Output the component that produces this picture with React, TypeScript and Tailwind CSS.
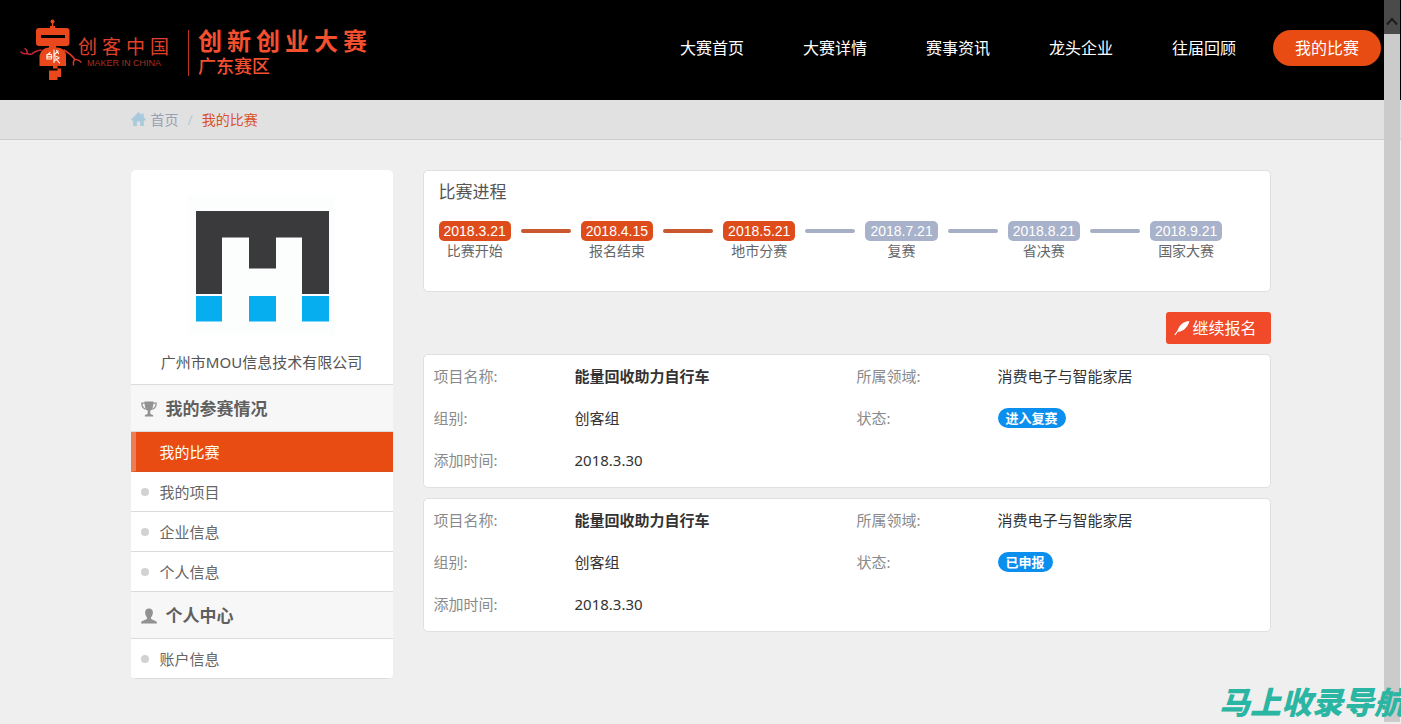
import React from "react";

const navItems = ["大赛首页", "大赛详情", "赛事资讯", "龙头企业", "往届回顾", "我的比赛"];

const menuSections = [
  {
    title: "我的参赛情况",
    icon: <TrophyIcon />,
    items: ["我的比赛", "我的项目", "企业信息", "个人信息"],
  },
  { title: "个人中心", icon: <PersonIcon />, items: ["账户信息"] },
];

const steps = [
  { date: "2018.3.21", label: "比赛开始", done: true },
  { date: "2018.4.15", label: "报名结束", done: true },
  { date: "2018.5.21", label: "地市分赛", done: true },
  { date: "2018.7.21", label: "复赛", done: false },
  { date: "2018.8.21", label: "省决赛", done: false },
  { date: "2018.9.21", label: "国家大赛", done: false },
];

const projects = [
  { name: "能量回收助力自行车", field: "消费电子与智能家居", group: "创客组", status: "进入复赛", added: "2018.3.30" },
  { name: "能量回收助力自行车", field: "消费电子与智能家居", group: "创客组", status: "已申报", added: "2018.3.30" },
];

function HomeIcon() {
  return (
    <svg viewBox="0 0 16 16" className="h-4 w-4 text-[#a9c9dc]" fill="currentColor" aria-hidden="true">
      <path d="M7.500 0 0 7.500l.9.900h1.300V14h3.600V9.500h3.400V14h3.600V8.400h1.300l.9-.900L12.700 5.200V1.500h-2v1.700z" />
    </svg>
  );
}

function TrophyIcon() {
  return (
    <svg viewBox="0 0 16 16" className="h-4 w-4" fill="none" aria-hidden="true">
      <path d="M4.500 2.200H.8c0 3.300 1.700 5.700 5 6.300M11.500 2.200h3.700c0 3.300-1.700 5.700-5 6.300" stroke="currentColor" strokeWidth="1.200" />
      <path d="M3.500.5h9c0 4.700-.9 8-3.200 9.200v2.500c0 1 2.300 1.300 2.900 2.200v1H3.800v-1c.6-.9 2.900-1.200 2.900-2.200V9.700C4.400 8.500 3.500 5.200 3.500.5z" fill="currentColor" />
    </svg>
  );
}

function PersonIcon() {
  return (
    <svg viewBox="0 0 16 16" className="h-4 w-4" fill="currentColor" aria-hidden="true">
      <path d="M8 .5c2.400 0 3.900 1.600 3.900 4 0 2.100-.9 3.900-1.900 4.900v1.300c.3.800 4.300 1.700 5.400 2.900.4.500.6 1.300.6 1.900H0c0-.6.2-1.400.6-1.900 1.100-1.200 5.100-2.100 5.400-2.900V9.400C5 8.400 4.100 6.600 4.100 4.500 4.100 2.100 5.600.5 8 .5z" />
    </svg>
  );
}

function FeatherIcon() {
  return (
    <svg viewBox="0 0 16 16" className="h-4 w-4" fill="currentColor" aria-hidden="true">
      <path d="M15.500 1.200C12 .8 8.300 2.700 6.200 5.500 4.800 7.300 4.200 9 3.500 10.500L.3 14.800l.9.400L4 11.700c2.800-.1 5.500-1.400 7.400-3.500 1.900-2 3.400-4.600 4.100-7z" />
    </svg>
  );
}

function Robot() {
  return (
    <svg viewBox="18 18 66 64" className="h-16 w-[66px] shrink-0" fill="none" aria-hidden="true">
      <g fill="#e8481c">
        <circle cx="52.500" cy="21.500" r="2" />
        <rect x="51.800" y="22" width="1.500" height="6" />
        <rect x="50" y="26" width="5" height="3" />
        <path fillRule="evenodd" d="M39 28h27.500a3 3 0 0 1 3 3v12a3 3 0 0 1-3 3H39a3 3 0 0 1-3-3V31a3 3 0 0 1 3-3zM41 35v3h24v-3z" />
        <rect x="49" y="46" width="7" height="3" />
        <path d="M39.500 66V55.500q2-7.500 9-8h9q7.500 1 8.500 7V66z" />
        <path d="M53 65h4.500v3.500H61V77h-3.500v3H49v-9.500h8.500v-2H53z" />
      </g>
      <g strokeWidth="1.500" strokeLinecap="round" strokeLinejoin="round">
        <path d="M41 50q-6 1-9 4-3 .5-5-.5-4 1-6-1.500M27 53.500q1-3-2-5" stroke="#c92335" />
        <path d="M64 50q7 4 11 9.500M81 62q-3-3-6-2.500-2 1-1.500 5.500" stroke="#d93627" />
      </g>
      <g stroke="#fff3e8" strokeWidth="1.200" strokeLinecap="round">
        <path d="M47 54.500h4.500v4.500H47zM46.500 56.800h5.500M50 52.500l-2 2M54 50v12.500M54 55l4-4M54 55.500l5 2M54 61l5-3M55.500 58l4 5M56.500 50.500l2 3" />
      </g>
    </svg>
  );
}

function SpacedText({ text, className }: { text: string; className: string }) {
  return (
    <span className={className}>
      {Array.from(text).map((ch, i) => (
        <span key={i}>{ch}</span>
      ))}
    </span>
  );
}

function Header() {
  return (
    <header className="flex min-h-[100px] flex-wrap items-center justify-between bg-black pr-5 pl-[18px]">
      <a href="#" className="flex items-center text-[#f4502f]">
        <Robot />
        <span className="-ml-1.5 flex flex-col pt-1">
          <SpacedText text="创客中国" className="flex gap-[5px] text-[19px] leading-[22px] text-[#e0402a]" />
          <span className="pl-[9px] font-['Liberation_Sans',sans-serif] text-[9px] leading-[10px] whitespace-nowrap text-[#a8301f]">
            MAKER IN CHINA
          </span>
        </span>
        <span className="mt-1.5 ml-[19px] h-[46px] w-px bg-[#c23422]" />
        <span className="ml-[9px] flex flex-col pt-1.5">
          <SpacedText text="创新创业大赛" className="flex gap-[5px] text-[24px] leading-[26px] font-bold" />
          <span className="text-[18px] leading-[24px] font-medium">广东赛区</span>
        </span>
      </a>
      <nav className="flex gap-[15px] pb-1 text-[16px] leading-9 text-white">
        {navItems.map((item) => (
          <a
            key={item}
            href="#"
            className={item === "我的比赛" ? "rounded-full bg-[#e84c12] px-[22px]" : "rounded-full px-[22px]"}
          >
            {item}
          </a>
        ))}
      </nav>
    </header>
  );
}

function Breadcrumb() {
  return (
    <div className="border-b border-[#cdcdcd] bg-[#e1e1e1]">
      <nav className="mx-auto flex h-[39px] w-full max-w-[1140px] items-center text-[14px]">
        <a href="#" className="flex items-center gap-1 text-[#9aa0b4]">
          <HomeIcon />
          首页
        </a>
        <span className="px-[9px] text-[#b5cbd8]">/</span>
        <span className="text-[#d9512c]">我的比赛</span>
      </nav>
    </div>
  );
}

function Sidebar() {
  return (
    <aside className="w-[262px] shrink-0 overflow-hidden rounded-[5px] bg-white text-[15px] text-[#666]">
      <div className="flex flex-col items-center border-b border-[#dcdcdc] pt-5 pb-[9px]">
        <svg viewBox="0 0 150 150" className="h-[150px] w-[150px]" role="img" aria-label="MOU">
          <rect x="1" y="5" width="147" height="140" fill="#fcfdfd" />
          <path d="M9 21h133v83h-27V47.500H89v31H62v-31H35V104H9z" fill="#3a3a3c" />
          <path d="M9 106h26v25.500H9zM62 106h27v25.500H62zM115 106h27v25.500h-27z" fill="#06adef" />
        </svg>
        <p className="mt-[9px] leading-[26px] text-[#555]">广州市MOU信息技术有限公司</p>
      </div>
      {menuSections.map((section) => (
        <section key={section.title}>
          <h2 className="flex h-[47px] items-center gap-[9px] border-b border-[#dcdcdc] bg-[#f7f7f7] px-[10px] pt-px text-[17px] font-bold text-[#5f5f5f]">
            <span className="text-[#929292]">{section.icon}</span>
            {section.title}
          </h2>
          <ul>
            {section.items.map((item) =>
              item === "我的比赛" ? (
                <li key={item}>
                  <a
                    href="#"
                    aria-current="page"
                    className="flex h-10 items-center border-b border-l-[5px] border-b-[#dc4f1e] border-l-[#ef7c52] bg-[#e84c12] pt-px pl-6 text-white"
                  >
                    {item}
                  </a>
                </li>
              ) : (
                <li key={item}>
                  <a href="#" className="flex h-10 items-center gap-[11px] border-b border-[#dcdcdc] pt-px pl-[10px]">
                    <span className="mb-px h-2 w-2 rounded-full bg-[#d2d2d2]" />
                    {item}
                  </a>
                </li>
              ),
            )}
          </ul>
        </section>
      ))}
    </aside>
  );
}

function Progress() {
  return (
    <section className="rounded-[5px] border border-[#e0e0e0] bg-white px-[15px] pt-[11px] pb-[30px]">
      <h2 className="text-[17px] leading-5 text-[#555]">比赛进程</h2>
      <ol className="mt-[19px] flex flex-wrap gap-[10px]">
        {steps.map((step, i) => (
          <li key={step.date} className="flex gap-[10px]">
            {i > 0 && (
              <span className={step.done ? "mt-2 h-1 w-[50px] rounded-full bg-[#c9572f]" : "mt-2 h-1 w-[50px] rounded-full bg-[#a6afc4]"} />
            )}
            <span className="flex flex-col items-center leading-5">
              <span
                className={
                  step.done
                    ? "rounded-[5px] bg-[#df4c1b] px-[5px] font-['Liberation_Sans',sans-serif] text-[14px] text-white"
                    : "rounded-[5px] bg-[#a8b2ca] px-[5px] font-['Liberation_Sans',sans-serif] text-[14px] text-white"
                }
              >
                {step.date}
              </span>
              <span className="text-[14px] text-[#666]">{step.label}</span>
            </span>
          </li>
        ))}
      </ol>
    </section>
  );
}

function ProjectCard({ project }: { project: (typeof projects)[number] }) {
  return (
    <dl className="grid grid-cols-[1fr_2fr_1fr_2fr] rounded-[5px] border border-[#e0e0e0] bg-white pb-[6px] text-[15px] leading-[42px] text-[#333] [&>*]:px-[10px] [&>dt]:text-[#8a8a8a]">
      <dt>项目名称:</dt>
      <dd className="font-bold">{project.name}</dd>
      <dt>所属领域:</dt>
      <dd>{project.field}</dd>
      <dt>组别:</dt>
      <dd>{project.group}</dd>
      <dt>状态:</dt>
      <dd className="flex items-center">
        <span className="rounded-full bg-[#0a8fee] px-2 text-[13px] leading-5 font-bold text-white">{project.status}</span>
      </dd>
      <dt>添加时间:</dt>
      <dd>{project.added}</dd>
    </dl>
  );
}

function ScrollTrack() {
  return (
    <div className="absolute top-0 right-px bottom-0.5 w-4 bg-[#cbcbcb]" aria-hidden="true">
      <div className="flex h-[34px] justify-center bg-[#4a4a4a] pt-4">
        <svg viewBox="0 0 12 12" className="h-3 w-3" fill="none" stroke="#1c1c1c" strokeWidth="2">
          <path d="M1 8.500 6 3l5 5.500" />
        </svg>
      </div>
    </div>
  );
}

export default function App() {
  return (
    <div className="relative min-h-screen overflow-hidden bg-[#efefef] font-['Noto_Sans','Noto_Sans_CJK_SC',sans-serif]">
      <Header />
      <Breadcrumb />
      <main className="mx-auto flex w-full max-w-[1140px] items-start gap-[30px] pt-[30px] pb-11">
        <Sidebar />
        <div className="flex min-w-0 flex-1 flex-col gap-[10px]">
          <Progress />
          <button
            type="button"
            className="mt-[10px] flex h-8 items-center gap-[2px] self-end rounded-[3px] bg-[#f04a2b] pr-[14px] pl-2 text-[16px] text-white"
          >
            <FeatherIcon />
            继续报名
          </button>
          {projects.map((project, i) => (
            <ProjectCard key={i} project={project} />
          ))}
        </div>
      </main>
      <ScrollTrack />
      <p className="absolute -right-1 bottom-1 text-[31px] leading-9 font-black whitespace-nowrap text-[#2bb5a3] italic">
        马上收录导航
      </p>
    </div>
  );
}
